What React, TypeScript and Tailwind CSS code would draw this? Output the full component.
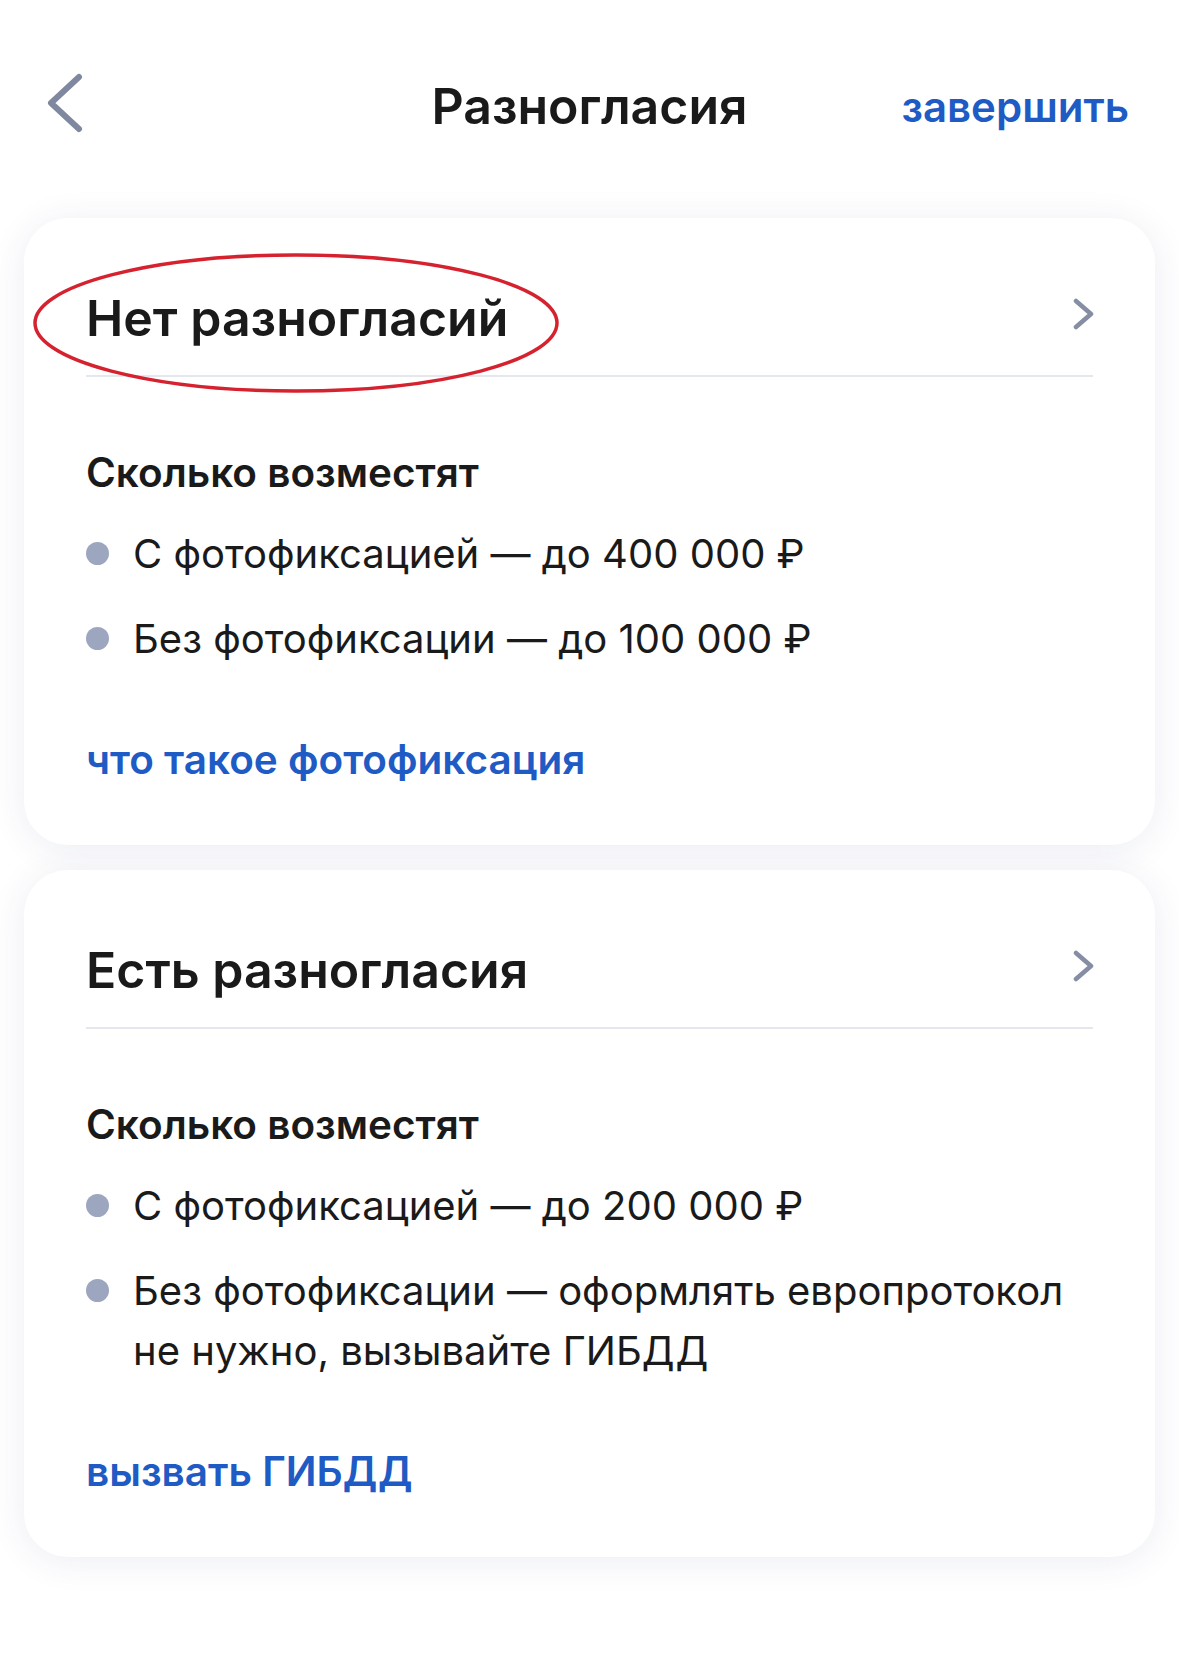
import React from 'react';

const font = { fontFamily: 'Inter, "Noto Sans", sans-serif' };

const Chevron = ({ dir, className }: { dir: 'left' | 'right'; className?: string }) =>
  dir === 'left' ? (
    <svg viewBox="0 0 38 60" className={className} fill="none">
      <path d="M34 4 L6 30 L34 56" stroke="currentColor" strokeWidth="6" strokeLinecap="round" strokeLinejoin="round" />
    </svg>
  ) : (
    <svg viewBox="0 0 22 32" className={className} fill="none">
      <path d="M3 3 L18 16 L3 29" stroke="currentColor" strokeWidth="4.5" strokeLinecap="round" strokeLinejoin="round" />
    </svg>
  );

const Bullet = ({ children }: { children: React.ReactNode }) => (
  <li className="flex items-start gap-[24px]">
    <span className="mt-[18px] h-[23px] w-[23px] shrink-0 rounded-full bg-[#9ca6bf]" />
    <span>{children}</span>
  </li>
);

const Card = ({
  title,
  items,
  link,
  circled,
}: {
  title: string;
  items: string[];
  link: string;
  circled?: boolean;
}) => (
  <section className="mx-[24px] rounded-[44px] bg-white px-[62px] pb-[57px] shadow-[0_4px_36px_rgba(40,60,120,0.09)]">
    {/* Title row */}
    <div className="relative flex items-center justify-between border-b-2 border-[#e4e7ee] pt-[64px] pb-[21px]">
      <h2 className="text-[50px] font-semibold leading-[72px] text-[#1a1a1a]">{title}</h2>
      <Chevron dir="right" className="mr-[-2px] mt-[-8px] h-[32px] w-[22px] text-[#858ea3]" />
      {circled && (
        <svg className="pointer-events-none absolute left-[-54px] top-[33px] h-[144px] w-[528px]" viewBox="0 0 528 144" fill="none">
          <ellipse cx="264" cy="72" rx="261" ry="68" stroke="#d5222e" strokeWidth="3.5" />
        </svg>
      )}
    </div>

    <h3 className="mt-[68px] text-[40.5px] font-semibold leading-[56px] text-[#1a1a1a]">Сколько возместят</h3>
    <ul className="mt-[23px] flex flex-col gap-[25px] text-[40px] leading-[60px] text-[#1a1a1a]">
      {items.map((item) => (
        <Bullet key={item}>{item}</Bullet>
      ))}
    </ul>

    <a className="mt-[63px] block text-[40.5px] font-semibold leading-[56px] text-[#1f5bc4]">{link}</a>
  </section>
);

export default function App() {
  return (
    <div className="min-h-[1680px] bg-white" style={font}>
      <header className="relative mt-[51px] flex h-[110px] items-center justify-between pl-[45px] pr-[50px]">
        <Chevron dir="left" className="mt-[-6px] h-[60px] w-[38px] text-[#7f889f]" />
        <h1 className="absolute left-1/2 -translate-x-1/2 text-[50px] font-semibold text-[#1a1a1a]">Разногласия</h1>
        <a className="text-[42px] font-semibold text-[#1f5bc4]">завершить</a>
      </header>

      <main className="mt-[57px] flex flex-col gap-[25px]">
        <Card
          title="Нет разногласий"
          circled
          items={['С фотофиксацией — до 400 000 ₽', 'Без фотофиксации — до 100 000 ₽']}
          link="что такое фотофиксация"
        />
        <Card
          title="Есть разногласия"
          items={[
            'С фотофиксацией — до 200 000 ₽',
            'Без фотофиксации — оформлять европротокол не нужно, вызывайте ГИБДД',
          ]}
          link="вызвать ГИБДД"
        />
      </main>
    </div>
  );
}
